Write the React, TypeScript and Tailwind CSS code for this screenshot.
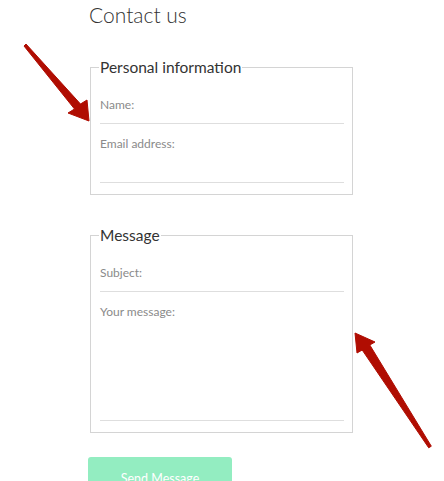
import React from "react";

function Field({ label, h }: { label: string; h: string }) {
  return (
    <div className={`border-b border-[#dedede] ${h}`}>
      <label className="block text-[12px] leading-[16px] text-[#8a8a8a]">{label}</label>
    </div>
  );
}

export default function App() {
  return (
    <div className="relative w-[444px] h-[481px] overflow-hidden bg-white" style={{ fontFamily: "Lato, 'Open Sans', sans-serif" }}>
      <div className="pl-[90px] pt-[2px]">
        <h1 className="-ml-[1px] text-[21px] leading-[26px] font-light text-[#333]">Contact us</h1>
        <form className="mt-[30px] flex flex-col">
          <fieldset className="w-[263px] border border-[#d4d4d4] m-0 p-0 pl-[9px] pr-[8px] pb-[11px]">
            <legend className="-ml-[1px] px-[1px] text-[15.5px] leading-[18px] text-[#333]">Personal information</legend>
            <div className="pt-[21px]">
              <Field label="Name:" h="h-[27px]" />
              <div className="pt-[12px]">
                <Field label="Email address:" h="h-[47px]" />
              </div>
            </div>
          </fieldset>
          <fieldset className="mt-[31px] w-[263px] border border-[#d4d4d4] m-0 p-0 pl-[9px] pr-[8px] pb-[11px]">
            <legend className="-ml-[1px] px-[1px] text-[15.5px] leading-[18px] text-[#333]">Message</legend>
            <div className="pt-[21px]">
              <Field label="Subject:" h="h-[27px]" />
              <div className="pt-[12px]">
                <Field label="Your message:" h="h-[117px]" />
              </div>
            </div>
          </fieldset>
          <button type="button" className="mt-[24px] -ml-[2px] w-[144px] h-[44px] shrink-0 rounded-[3px] bg-[#93edc1] text-white text-[12.5px]">
            Send Message
          </button>
        </form>
      </div>
      <svg className="absolute left-0 top-0 pointer-events-none" width="444" height="481" viewBox="0 0 444 481">
        <polygon
          points="24,46 74.5,109 68,113 89,121 87,100 80.5,104 26,44"
          fill="#b00d02"
          stroke="#b00d02"
          strokeWidth="1"
          strokeLinejoin="round"
        />
        <polygon
          points="428.7,447.8 362.2,350 357,353 355,333 375,342 369.8,345 431.3,446.2"
          fill="#b00d02"
          stroke="#b00d02"
          strokeWidth="1"
          strokeLinejoin="round"
        />
      </svg>
    </div>
  );
}
